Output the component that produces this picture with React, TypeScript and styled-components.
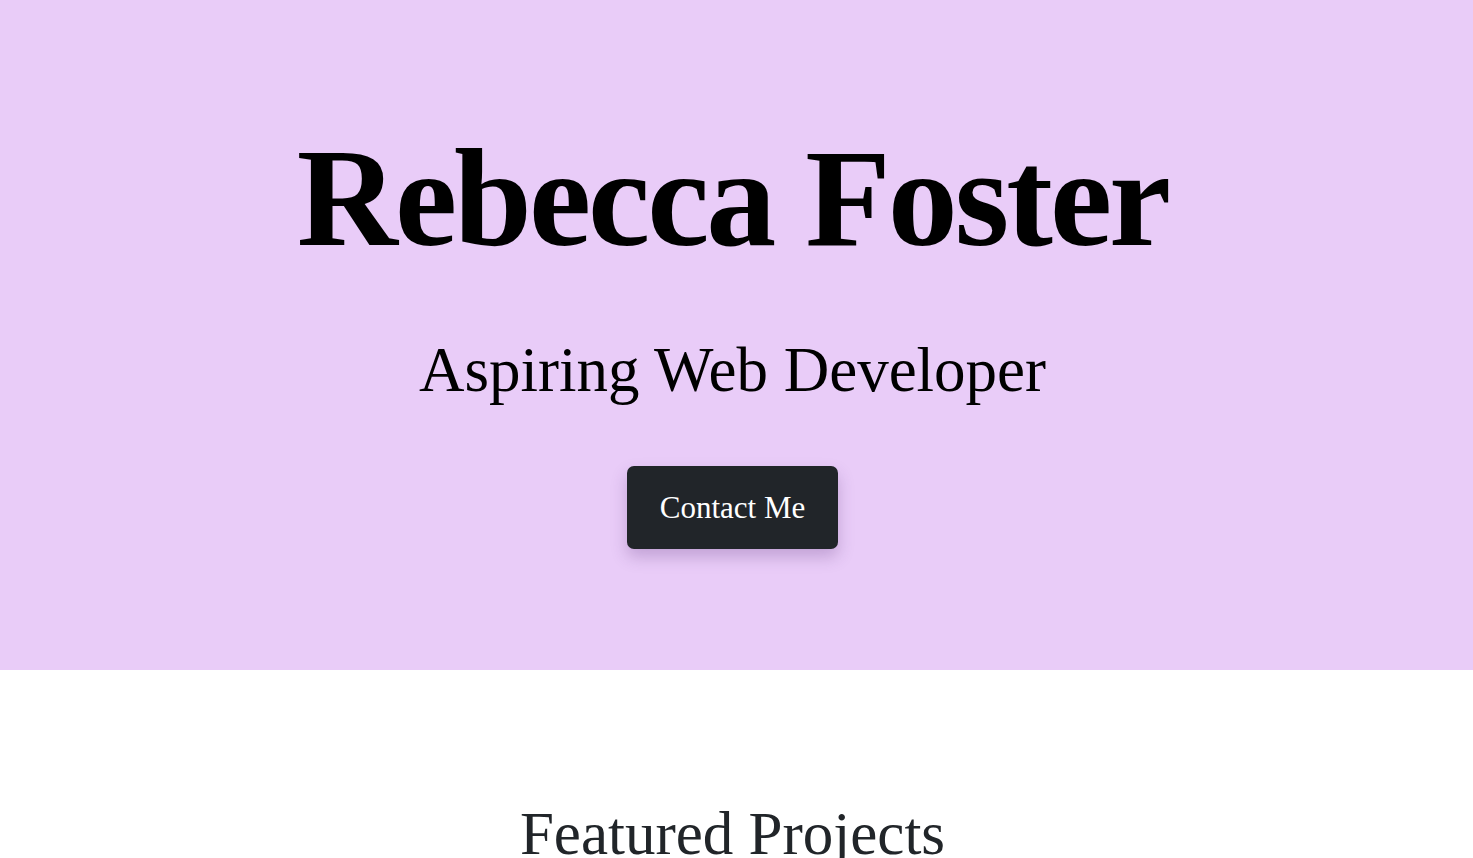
import React from "react";
import styled, { createGlobalStyle } from "styled-components";

const Global = createGlobalStyle`
  html, body { margin: 0; padding: 0; background: #ffffff; }
  body { font-family: "Liberation Serif", serif; color: #212529; }
  * { box-sizing: border-box; }
`;

const Hero = styled.header`
  height: 670px;
  background: #e9ccf8;
  display: flex;
  flex-direction: column;
  align-items: center;
  padding: 118px 8px 0 0;
`;

const Title = styled.h1`
  margin: 0;
  font-family: "Liberation Serif", "DejaVu Serif", serif;
  font-weight: 700;
  font-size: 140px;
  line-height: 160px;
  letter-spacing: -3px;
  color: #000;
`;

const Subtitle = styled.p`
  margin: 54px 0 0;
  font-family: "Liberation Serif", serif;
  font-weight: 400;
  font-size: 63px;
  line-height: 76px;
  letter-spacing: 0;
  color: #000;
`;

const ContactButton = styled.button`
  margin-top: 58px;
  width: 211px;
  height: 83px;
  border: none;
  border-radius: 7px;
  background: #212529;
  color: #ffffff;
  font-family: "Liberation Serif", serif;
  font-size: 31px;
  box-shadow: 0 8px 16px rgba(80, 40, 110, 0.25);
  cursor: pointer;
`;

const Section = styled.section`
  display: flex;
  flex-direction: column;
  align-items: center;
  padding: 128px 8px 0 0;
`;

const SectionTitle = styled.h2`
  margin: 0;
  font-family: "Liberation Serif", serif;
  font-weight: 400;
  font-size: 61px;
  line-height: 72px;
  color: #212529;
`;

export default function App() {
  return (
    <>
      <Global />
      <Hero>
        <Title>Rebecca Foster</Title>
        <Subtitle>Aspiring Web Developer</Subtitle>
        <ContactButton>Contact Me</ContactButton>
      </Hero>
      <Section>
        <SectionTitle>Featured Projects</SectionTitle>
      </Section>
    </>
  );
}
